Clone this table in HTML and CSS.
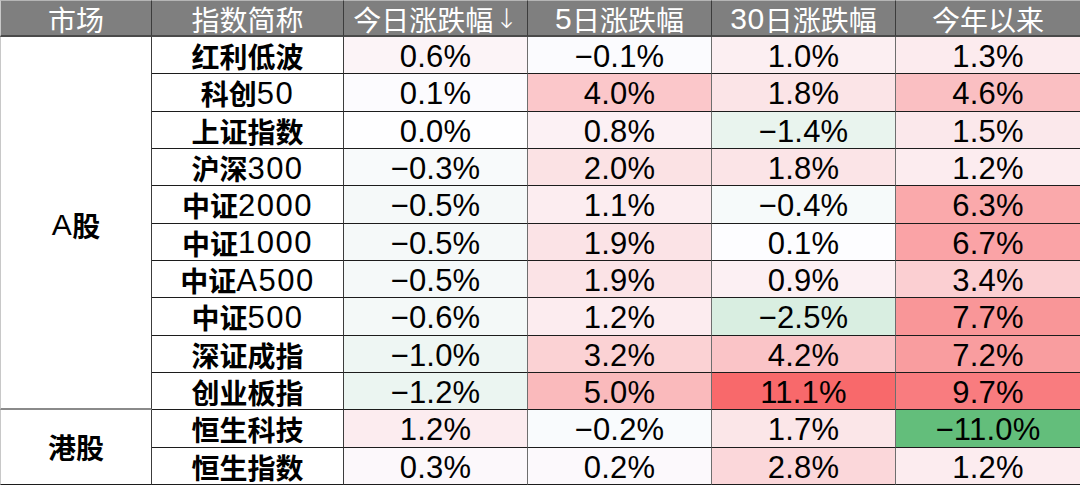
FILE: index.html
```html
<!DOCTYPE html>
<html lang="zh-CN">
<head>
<meta charset="utf-8">
<title>指数涨跌幅</title>
<link rel="stylesheet" href="styles.css">
</head>
<body>
<div class="table">
  <div class="th first">市场</div>
  <div class="th">指数简称</div>
  <div class="th">今日涨跌幅<span class="arrow">↓</span></div>
  <div class="th"><span class="lat">5</span>日涨跌幅</div>
  <div class="th"><span class="lat">30</span>日涨跌幅</div>
  <div class="th last">今年以来</div>

  <div class="market a"><span class="lat">A</span>股</div>
  <div class="name">红利低波</div>
  <div class="v" style="background:rgb(252,244,247)">0.6%</div>
  <div class="v" style="background:rgb(251,251,254)">−0.1%</div>
  <div class="v" style="background:rgb(252,239,242)">1.0%</div>
  <div class="v last" style="background:rgb(252,235,238)">1.3%</div>

  <div class="name">科创<span class="lat">50</span></div>
  <div class="v" style="background:rgb(252,251,254)">0.1%</div>
  <div class="v" style="background:rgb(251,199,202)">4.0%</div>
  <div class="v" style="background:rgb(251,228,231)">1.8%</div>
  <div class="v last" style="background:rgb(250,191,194)">4.6%</div>

  <div class="name">上证指数</div>
  <div class="v" style="background:rgb(254,254,255)">0.0%</div>
  <div class="v" style="background:rgb(252,241,244)">0.8%</div>
  <div class="v" style="background:rgb(233,244,238)">−1.4%</div>
  <div class="v last" style="background:rgb(251,232,235)">1.5%</div>

  <div class="name">沪深<span class="lat">300</span></div>
  <div class="v" style="background:rgb(248,250,251)">−0.3%</div>
  <div class="v" style="background:rgb(251,226,228)">2.0%</div>
  <div class="v" style="background:rgb(251,228,231)">1.8%</div>
  <div class="v last" style="background:rgb(252,236,239)">1.2%</div>

  <div class="name">中证<span class="lat">2000</span></div>
  <div class="v" style="background:rgb(245,249,249)">−0.5%</div>
  <div class="v" style="background:rgb(252,237,240)">1.1%</div>
  <div class="v" style="background:rgb(246,250,250)">−0.4%</div>
  <div class="v last" style="background:rgb(250,169,171)">6.3%</div>

  <div class="name">中证<span class="lat">1000</span></div>
  <div class="v" style="background:rgb(245,249,249)">−0.5%</div>
  <div class="v" style="background:rgb(251,227,230)">1.9%</div>
  <div class="v" style="background:rgb(253,253,255)">0.1%</div>
  <div class="v last" style="background:rgb(250,163,166)">6.7%</div>

  <div class="name">中证<span class="lat">A500</span></div>
  <div class="v" style="background:rgb(245,249,249)">−0.5%</div>
  <div class="v" style="background:rgb(251,227,230)">1.9%</div>
  <div class="v" style="background:rgb(252,240,243)">0.9%</div>
  <div class="v last" style="background:rgb(251,207,210)">3.4%</div>

  <div class="name">中证<span class="lat">500</span></div>
  <div class="v" style="background:rgb(244,249,248)">−0.6%</div>
  <div class="v" style="background:rgb(252,236,239)">1.2%</div>
  <div class="v" style="background:rgb(217,238,225)">−2.5%</div>
  <div class="v last" style="background:rgb(249,150,152)">7.7%</div>

  <div class="name">深证成指</div>
  <div class="v" style="background:rgb(238,246,243)">−1.0%</div>
  <div class="v" style="background:rgb(251,210,212)">3.2%</div>
  <div class="v" style="background:rgb(250,196,199)">4.2%</div>
  <div class="v last" style="background:rgb(249,157,159)">7.2%</div>

  <div class="name">创业板指</div>
  <div class="v" style="background:rgb(235,245,241)">−1.2%</div>
  <div class="v" style="background:rgb(250,186,188)">5.0%</div>
  <div class="v" style="background:rgb(248,105,107)">11.1%</div>
  <div class="v last" style="background:rgb(249,124,127)">9.7%</div>

  <div class="market hk">港股</div>
  <div class="name">恒生科技</div>
  <div class="v" style="background:rgb(252,236,239)">1.2%</div>
  <div class="v" style="background:rgb(249,251,253)">−0.2%</div>
  <div class="v" style="background:rgb(251,230,232)">1.7%</div>
  <div class="v last" style="background:rgb(99,190,123)">−11.0%</div>

  <div class="name">恒生指数</div>
  <div class="v" style="background:rgb(252,248,251)">0.3%</div>
  <div class="v" style="background:rgb(252,249,252)">0.2%</div>
  <div class="v" style="background:rgb(251,215,218)">2.8%</div>
  <div class="v last" style="background:rgb(252,236,239)">1.2%</div>
</div>
</body>
</html>
```

FILE: styles.css
```css
html, body {
  margin: 0;
  padding: 0;
  background: #ffffff;
}

.table {
  width: 1080px;
  height: 485px;
  display: grid;
  grid-template-columns: 152px 192px 184px 184px 184px 184px;
  grid-template-rows: 37px repeat(12, 1fr);
  font-family: "Noto Sans CJK SC", "Liberation Sans", sans-serif;
  color: #000;
  box-sizing: border-box;
  line-height: 1;
}

.table > div {
  display: flex;
  align-items: center;
  justify-content: center;
  box-sizing: border-box;
  border-right: 1px solid #6e6e6e;
  border-bottom: 1px solid #1c1c1c;
  white-space: nowrap;
  line-height: 1;
}

.table > div.last {
  border-right: none;
}

.th {
  background: #7f7f7f;
  color: #ffffff;
  font-size: 28px;
  font-weight: 400;
  border-top: 1px solid #b5b5b5;
  border-bottom: 2px solid #4a4a4a !important;
  border-right-color: #3c3c3c !important;
  padding-top: 1px;
}

.th.first {
  border-left: 1px solid #c8c8c8;
}

.lat {
  font-family: "Liberation Sans", "Noto Sans CJK SC", sans-serif;
  font-weight: 400;
  font-size: 30px;
  letter-spacing: 0.5px;
  line-height: 1;
}

.arrow {
  font-family: "DejaVu Sans", sans-serif;
  font-weight: 300;
  font-size: 27px;
  margin-left: 2px;
  line-height: 1;
}

.market {
  grid-column: 1;
  font-size: 28px;
  font-weight: 700;
  background: #ffffff;
  border-left: 1px solid #c8c8c8;
  border-right: 1px solid #3c3c3c !important;
}

.market.a {
  grid-row: 2 / span 10;
  border-bottom: 2px solid #8a8a8a !important;
  padding-top: 4px;
}

.market.hk {
  grid-row: 12 / span 2;
  border-bottom: 1px solid #1c1c1c;
}

.name {
  font-size: 28px;
  font-weight: 700;
  background: #ffffff;
  border-right-color: #3c3c3c !important;
  padding-top: 2px;
}

.name .lat {
  letter-spacing: 1.5px;
  font-size: 31px;
}

.v {
  font-family: "Liberation Sans", sans-serif;
  font-size: 31px;
  letter-spacing: 0.2px;
  padding-top: 3px;
}
```
